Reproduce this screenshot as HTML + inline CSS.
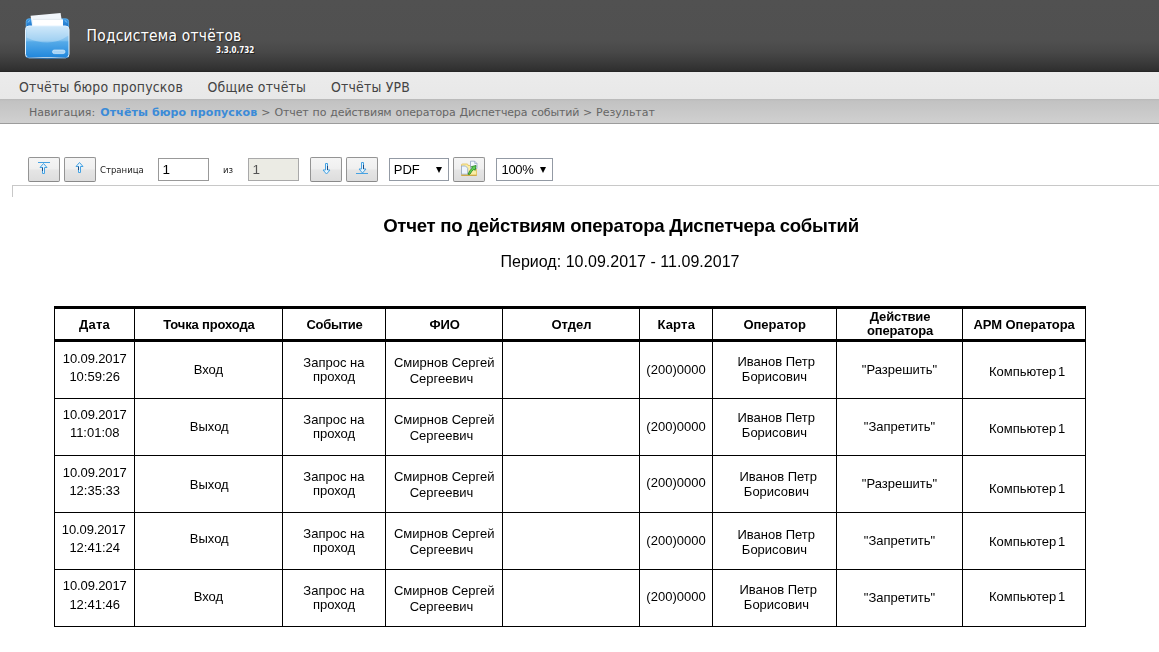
<!DOCTYPE html>
<html lang="ru">
<head>
<meta charset="utf-8">
<title>Подсистема отчётов</title>
<style>
html,body{margin:0;padding:0;}
body{width:1159px;height:652px;overflow:hidden;background:#fff;position:relative;font-family:"Liberation Sans",sans-serif;color:#000;}
#hdr{position:absolute;left:0;top:0;width:1159px;height:72px;background:linear-gradient(#515151 0px,#505050 40px,#484848 52px,#3a3a3a 63px,#303030 70px,#2a2a2a 71px,#222 72px);}
#hdr .ttl{position:absolute;left:86.5px;top:25.7px;font-family:"DejaVu Sans","Liberation Sans",sans-serif;font-stretch:condensed;font-size:15.4px;letter-spacing:0.25px;line-height:20px;color:#fff;white-space:nowrap;text-shadow:1px 1px 1px #222;}
#hdr .ver{position:absolute;left:216px;top:45.5px;font-family:"DejaVu Sans","Liberation Sans",sans-serif;font-stretch:condensed;font-weight:bold;font-size:8px;line-height:10px;color:#fff;white-space:nowrap;text-shadow:1px 1px 0 #222;}
#menu{position:absolute;left:0;top:72px;width:1159px;height:27px;background:linear-gradient(#ebebeb,#e8e8e8);}
#menu span{position:absolute;top:5.6px;font-family:"DejaVu Sans","Liberation Sans",sans-serif;font-stretch:condensed;font-size:13.9px;letter-spacing:0.2px;line-height:18px;color:#444;white-space:nowrap;}
#nav{position:absolute;left:0;top:99px;width:1159px;height:24px;background:linear-gradient(#b8b8b8 0,#c2c2c2 2px,#d0d0d0 24px);border-bottom:1px solid #9c9c9c;}
#nav .t{position:absolute;left:29px;top:7px;font-family:"DejaVu Sans","Liberation Sans",sans-serif;font-size:11px;line-height:14px;color:#666;white-space:nowrap;}
#nav .t b{color:#3b8bd8;letter-spacing:0.1px;}
#nav .n1{word-spacing:1.7px;}
#nav .n2{letter-spacing:-0.15px;word-spacing:0.75px;}
#nav .n3{word-spacing:0.3px;}
.btn{position:absolute;top:157px;height:23px;width:30px;border:1px solid #949494;border-bottom-color:#8a8a8a;border-radius:2px;background:linear-gradient(#f5f5f5 0,#efefef 46%,#e5e5e5 54%,#dddddd 100%);box-sizing:content-box;}
.inp{position:absolute;top:158px;height:21px;border:1px solid #999;background:#fff;font-size:13.5px;line-height:21px;padding-left:3.5px;box-sizing:content-box;}
.lbl{position:absolute;top:164px;font-family:"DejaVu Sans","Liberation Sans",sans-serif;font-stretch:condensed;font-size:9.5px;line-height:12px;color:#222;}
.dis{background:#ebebe4;color:#545454;border-color:#a9a9a9;}
.sel{position:absolute;top:158px;height:21px;border:1px solid #939aa4;background:#fff;font-size:13px;line-height:21px;box-sizing:content-box;}
.sel span{position:absolute;left:3.8px;top:-0.5px;}
.sel i{position:absolute;top:7.5px;width:0;height:0;border-left:3.5px solid transparent;border-right:3.5px solid transparent;border-top:6px solid #000;}
.btn svg{position:absolute;left:0;top:0;}
#frame{position:absolute;left:12px;top:185px;width:1147px;height:11px;border-left:1px solid #c8c8c8;border-top:1px solid #c8c8c8;}
#rt{position:absolute;left:320.8px;top:214.5px;width:600px;text-align:center;font-weight:bold;font-size:18.6px;letter-spacing:-0.27px;line-height:22px;white-space:nowrap;}
#rp{position:absolute;left:469.8px;top:251.5px;letter-spacing:0.03px;width:300px;text-align:center;font-size:16px;line-height:20px;white-space:nowrap;}
#tb,#rt,#rp,.lbl,.inp,.sel{will-change:transform;}
#tb{position:absolute;left:54px;top:306px;width:1032px;border-collapse:separate;border-spacing:0;table-layout:fixed;font-size:13px;line-height:15px;color:#000;}
#tb th,#tb td{position:relative;box-sizing:border-box;padding:0;border:0 solid #000;border-left-width:1px;border-top-width:1px;height:57px;font-weight:normal;}
#tb th:last-child,#tb td:last-child{border-right-width:1px;}
#tb th{border-top-width:3px;border-bottom-width:3px;height:36px;font-weight:bold;}
#tb tr.r0 td{border-top-width:0;height:56px;}
#tb tr.rl td{border-bottom-width:1px;height:58px;}
#tb span{position:absolute;display:block;width:200px;text-align:center;white-space:nowrap;}
</style>
</head>
<body>
<div id="hdr">
<svg id="ico" width="50" height="50" viewBox="0 0 50 50" style="position:absolute;left:22px;top:10px">
<defs>
<linearGradient id="g1" x1="0" y1="0" x2="0" y2="1"><stop offset="0" stop-color="#bfe0f8"/><stop offset="0.45" stop-color="#7fc0ee"/><stop offset="0.5" stop-color="#55aae8"/><stop offset="1" stop-color="#1f86dc"/></linearGradient>
<linearGradient id="g2" x1="0" y1="0" x2="0" y2="1"><stop offset="0" stop-color="#3d9ae6"/><stop offset="1" stop-color="#1c74c8"/></linearGradient>
</defs>
<path d="M4.200 17v-5.500q0-2.700 2.700-2.700h37q2.700 0 2.700 2.700v5.500z" fill="url(#g2)" stroke="#5db2f0" stroke-width="0.8"/>
<path d="M6 12.500l1.800-2.200M44.800 12.500l-1.800-2.200" stroke="#9fd2f8" stroke-width="0.8" fill="none"/>
<path d="M8.600 5.800l30-2.800l2 13h-30.500z" fill="#f1f6fb"/>
<path d="M11 9.400h30v8h-30z" fill="#ffffff"/>
<path d="M11 9.400h29.500" stroke="#d5dde6" stroke-width="0.6"/>
<rect x="3.500" y="16" width="43.500" height="31.800" rx="3.500" fill="url(#g1)" stroke="#e4f3ff" stroke-width="1"/>
<path d="M4.500 19.500q0-3 3-3h36q3 0 3 3v6q-10 7-21 7t-21-5z" fill="#ffffff" opacity="0.28"/>
<rect x="30.500" y="40" width="12.500" height="3.600" rx="1.800" fill="#a8d4f6" stroke="#e8f5ff" stroke-width="0.6"/>
<path d="M4 47.500q21 2.500 42.500 0" stroke="#1266b4" stroke-width="1" fill="none" opacity="0.7"/>
</svg>
<div class="ttl">Подсистема отчётов</div>
<div class="ver">3.3.0.732</div>
</div>
<div id="menu"><span style="left:19px">Отчёты бюро пропусков</span><span style="left:207.5px">Общие отчёты</span><span style="left:331px">Отчёты УРВ</span></div>
<div id="nav"><div class="t"><span class="n1">Навигация: </span><b>Отчёты бюро пропусков</b><span class="n2"> &gt; Отчет по действиям оператора Диспетчера событий</span><span class="n3"> &gt; Результат</span></div></div>
<div class="btn" style="left:28px"><svg width="30" height="23" viewBox="0 0 30 23"><path d="M9 4.500H21" stroke="#46a2e2" stroke-width="1" stroke-linejoin="miter" fill="none"/><path d="M14.500 5.500L11 9.500H13.500V15.500H15.500V9.500H18Z" fill="#e6f5ff" stroke="#46a2e2" stroke-width="1" stroke-linejoin="miter"/><path d="M13.500 9.500V13" stroke="#1d4a80" stroke-width="1" fill="none"/></svg></div>
<div class="btn" style="left:64px"><svg width="30" height="23" viewBox="0 0 30 23"><path d="M14.500 4.500L11 8.500H13.500V14.500H15.500V8.500H18Z" fill="#e6f5ff" stroke="#46a2e2" stroke-width="1" stroke-linejoin="miter"/><path d="M13.500 8.500V12" stroke="#1d4a80" stroke-width="1" fill="none"/></svg></div>
<div class="lbl" style="left:100px">Страница</div>
<div class="inp" style="left:158px;width:45.5px;">1</div>
<div class="lbl" style="left:223px">из</div>
<div class="inp dis" style="left:248px;width:45.5px;">1</div>
<div class="btn" style="left:310px"><svg width="30" height="23" viewBox="0 0 30 23"><path d="M15.500 16L12 12H14.500V5.500H16.500V12H19Z" fill="#e6f5ff" stroke="#46a2e2" stroke-width="1" stroke-linejoin="miter"/><path d="M16.500 8V12" stroke="#1d4a80" stroke-width="1" fill="none"/></svg></div>
<div class="btn" style="left:346px"><svg width="30" height="23" viewBox="0 0 30 23"><path d="M9 15.500H21" stroke="#46a2e2" stroke-width="1" stroke-linejoin="miter" fill="none"/><path d="M15.500 15L12 11H14.500V4.500H16.500V11H19Z" fill="#e6f5ff" stroke="#46a2e2" stroke-width="1" stroke-linejoin="miter"/><path d="M16.500 7V11" stroke="#1d4a80" stroke-width="1" fill="none"/></svg></div>
<div class="sel" style="left:389px;width:58px;"><span>PDF</span><i style="left:46px"></i></div>
<div class="btn" style="left:453px"><svg width="30" height="23" viewBox="0 0 30 23"><path d="M7.500 17.300V7q0-1 1-1h4.500q1 0 1 1v0.500h7.500q1 0 1 1v8.800z" fill="#faeea6" stroke="#e3bf55" stroke-width="0.8"/><path d="M16.500 3.200h4.200l2.300 2.300v5h-6.500z" fill="#f4f8fe" stroke="#94a6c6" stroke-width="0.8"/><path d="M20.700 3.200v2.300h2.300" fill="none" stroke="#94a6c6" stroke-width="0.7"/><path d="M7.500 8h4l2.200 2.200v6h-6.200z" fill="#eef5fd" stroke="#8ea3c4" stroke-width="0.8"/><path d="M7.300 17.300h15.400" stroke="#c9a03a" stroke-width="1"/><path d="M14 16.300q1.500-4.500 4.500-6.300l-1.300-1.300l4.800-1.200l-0.800 4.900l-1.300-1.200q-2.400 2-4 5.100z" fill="#5fd257" stroke="#1c7c1c" stroke-width="0.8" stroke-linejoin="round"/></svg></div>
<div class="sel" style="left:496px;width:55px;"><span style="letter-spacing:-0.3px;left:4.5px">100%</span><i style="left:43px"></i></div>
<div id="frame"></div>
<div id="rt">Отчет по действиям оператора Диспетчера событий</div>
<table id="tb"><colgroup>
<col style="width:80px">
<col style="width:148px">
<col style="width:103px">
<col style="width:117px">
<col style="width:137px">
<col style="width:73px">
<col style="width:124px">
<col style="width:126px">
<col style="width:124px">
</colgroup>
<thead><tr>
<th><span style="left:-60.50px;top:7.90px;letter-spacing:0.200px;">Дата</span></th>
<th><span style="left:-26.00px;top:7.75px;letter-spacing:-0.150px;">Точка прохода</span></th>
<th><span style="left:-48.60px;top:7.75px;letter-spacing:-0.300px;">Событие</span></th>
<th><span style="left:-41.30px;top:7.50px;">ФИО</span></th>
<th><span style="left:-31.50px;top:7.75px;">Отдел</span></th>
<th><span style="left:-63.75px;top:7.75px;letter-spacing:0.200px;">Карта</span></th>
<th><span style="left:-38.40px;top:7.75px;">Оператор</span></th>
<th><span style="left:-37.00px;top:-0.40px;letter-spacing:-0.120px;">Действие</span><span style="left:-37.00px;top:14.25px;letter-spacing:-0.150px;">оператора</span></th>
<th><span style="left:-38.90px;top:7.75px;letter-spacing:-0.050px;">АРМ Оператора</span></th>
</tr></thead><tbody>
<tr class="r0">
<td><span style="left:-60.25px;top:8.75px;letter-spacing:-0.120px;">10.09.2017</span><span style="left:-60.30px;top:27.00px;">10:59:26</span></td>
<td><span style="left:-26.60px;top:19.75px;">Вход</span></td>
<td><span style="left:-49.10px;top:12.75px;">Запрос на</span><span style="left:-49.00px;top:27.00px;">проход</span></td>
<td><span style="left:-41.80px;top:12.75px;">Смирнов Сергей</span><span style="left:-44.50px;top:28.75px;">Сергеевич</span></td>
<td></td>
<td><span style="left:-64.00px;top:19.75px;">(200)0000</span></td>
<td><span style="left:-36.75px;top:11.90px;">Иванов Петр</span><span style="left:-38.60px;top:26.90px;">Борисович</span></td>
<td><span style="left:-37.50px;top:19.75px;">"Разрешить"</span></td>
<td><span style="left:-35.90px;top:21.90px;word-spacing:-2.00px;">Компьютер 1</span></td>
</tr>
<tr>
<td><span style="left:-60.25px;top:8.00px;letter-spacing:-0.120px;">10.09.2017</span><span style="left:-60.30px;top:26.25px;">11:01:08</span></td>
<td><span style="left:-25.75px;top:19.75px;">Выход</span></td>
<td><span style="left:-49.10px;top:12.50px;">Запрос на</span><span style="left:-49.00px;top:26.75px;">проход</span></td>
<td><span style="left:-41.80px;top:12.75px;">Смирнов Сергей</span><span style="left:-44.50px;top:28.75px;">Сергеевич</span></td>
<td></td>
<td><span style="left:-64.00px;top:19.75px;">(200)0000</span></td>
<td><span style="left:-36.75px;top:11.00px;">Иванов Петр</span><span style="left:-38.60px;top:26.00px;">Борисович</span></td>
<td><span style="left:-37.50px;top:19.75px;">"Запретить"</span></td>
<td><span style="left:-35.90px;top:21.75px;word-spacing:-2.00px;">Компьютер 1</span></td>
</tr>
<tr>
<td><span style="left:-60.25px;top:8.50px;letter-spacing:-0.120px;">10.09.2017</span><span style="left:-60.30px;top:26.75px;">12:35:33</span></td>
<td><span style="left:-25.75px;top:20.50px;">Выход</span></td>
<td><span style="left:-49.10px;top:12.50px;">Запрос на</span><span style="left:-49.00px;top:26.75px;">проход</span></td>
<td><span style="left:-41.80px;top:12.75px;">Смирнов Сергей</span><span style="left:-44.50px;top:28.75px;">Сергеевич</span></td>
<td></td>
<td><span style="left:-64.00px;top:19.25px;">(200)0000</span></td>
<td><span style="left:-34.75px;top:12.75px;">Иванов Петр</span><span style="left:-36.60px;top:27.75px;">Борисович</span></td>
<td><span style="left:-37.50px;top:19.75px;">"Разрешить"</span></td>
<td><span style="left:-35.90px;top:25.00px;word-spacing:-2.00px;">Компьютер 1</span></td>
</tr>
<tr>
<td><span style="left:-61.25px;top:8.50px;letter-spacing:-0.120px;">10.09.2017</span><span style="left:-60.30px;top:26.75px;">12:41:24</span></td>
<td><span style="left:-25.75px;top:17.75px;">Выход</span></td>
<td><span style="left:-49.10px;top:12.50px;">Запрос на</span><span style="left:-49.00px;top:26.75px;">проход</span></td>
<td><span style="left:-41.80px;top:12.75px;">Смирнов Сергей</span><span style="left:-44.50px;top:28.75px;">Сергеевич</span></td>
<td></td>
<td><span style="left:-64.00px;top:20.25px;">(200)0000</span></td>
<td><span style="left:-36.75px;top:13.50px;">Иванов Петр</span><span style="left:-38.60px;top:28.50px;">Борисович</span></td>
<td><span style="left:-37.50px;top:19.75px;">"Запретить"</span></td>
<td><span style="left:-35.90px;top:20.75px;word-spacing:-2.00px;">Компьютер 1</span></td>
</tr>
<tr class="rl">
<td><span style="left:-60.25px;top:8.25px;letter-spacing:-0.120px;">10.09.2017</span><span style="left:-60.30px;top:26.50px;">12:41:46</span></td>
<td><span style="left:-26.60px;top:19.00px;">Вход</span></td>
<td><span style="left:-49.10px;top:12.50px;">Запрос на</span><span style="left:-49.00px;top:26.75px;">проход</span></td>
<td><span style="left:-41.80px;top:12.75px;">Смирнов Сергей</span><span style="left:-44.50px;top:28.75px;">Сергеевич</span></td>
<td></td>
<td><span style="left:-64.00px;top:19.25px;">(200)0000</span></td>
<td><span style="left:-34.75px;top:12.25px;">Иванов Петр</span><span style="left:-36.60px;top:27.25px;">Борисович</span></td>
<td><span style="left:-37.50px;top:19.75px;">"Запретить"</span></td>
<td><span style="left:-35.90px;top:19.00px;word-spacing:-2.00px;">Компьютер 1</span></td>
</tr>
</tbody></table>
<div id="rp">Период: 10.09.2017 - 11.09.2017</div>
</body>
</html>
